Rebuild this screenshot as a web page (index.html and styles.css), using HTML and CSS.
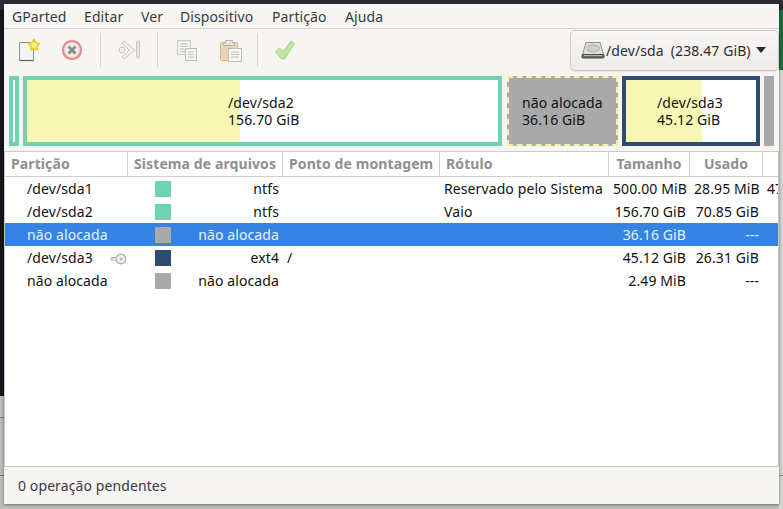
FILE: index.html
```html
<!DOCTYPE html>
<html lang="pt-BR">
<head>
<meta charset="utf-8">
<title>GParted</title>
<link rel="stylesheet" href="styles.css">
</head>
<body>
<div class="window">
  <nav class="menubar">
    <span class="menu m1">GParted</span>
    <span class="menu m2">Editar</span>
    <span class="menu m3">Ver</span>
    <span class="menu m4">Dispositivo</span>
    <span class="menu m5">Partição</span>
    <span class="menu m6">Ajuda</span>
  </nav>
  <div class="toolbar">
    <svg class="tool t-new" width="24" height="24" viewBox="0 0 24 24">
      <path d="M3.500 4.500h14v17.500a.5.5 0 0 1-.5.5h-13.500z" fill="#f4f4f0" stroke="#8f8f8a"/>
      <path d="M4 22.500h13.500" stroke="#5f5f5b" stroke-width="1.200"/>
      <path d="M18 1.500l1.800 3.300 3.700.7-2.600 2.700.5 3.800-3.400-1.700-3.400 1.700.5-3.800-2.600-2.700 3.700-.7z" fill="#fbf08a" stroke="#ecd21b" stroke-width="1.600" stroke-linejoin="round"/>
    </svg>
    <svg class="tool t-del" width="24" height="24" viewBox="0 0 24 24">
      <circle cx="12" cy="12" r="9" fill="#ececec" stroke="#e88d8d" stroke-width="2.400"/>
      <path d="M8.500 8.500l7 7M15.500 8.500l-7 7" stroke="#8a8a8a" stroke-width="2.800"/>
    </svg>
    <span class="sep sep1"></span>
    <svg class="tool t-undo" width="24" height="24" viewBox="0 0 24 24">
      <path d="M7 3l11 9-11 9-2-2 7-7-7-7z" fill="#f1f0ee" stroke="#c9c8c4" stroke-linejoin="round"/>
      <circle cx="5" cy="12" r="3" fill="#f1f0ee" stroke="#c6c5c1"/>
      <rect x="19.500" y="3" width="3" height="17" rx="1" fill="#e9e8e5" stroke="#c6c5c1"/>
    </svg>
    <span class="sep sep2"></span>
    <svg class="tool t-copy" width="24" height="24" viewBox="0 0 24 24">
      <rect x="2.500" y="2.500" width="13" height="14" fill="#f2f2f0" stroke="#c5c5c2"/>
      <path d="M5 6h8M5 8.500h8M5 11h8M5 13.500h5" stroke="#c6c6c3"/>
      <rect x="10.500" y="10.500" width="11" height="12" fill="#f2f2f0" stroke="#bcbcb9"/>
      <path d="M13 14h6M13 16.500h6M13 19h6" stroke="#c6c6c3"/>
    </svg>
    <svg class="tool t-paste" width="24" height="24" viewBox="0 0 24 24">
      <rect x="1.500" y="4.500" width="17" height="18" rx="1" fill="#ecd4b0" stroke="#d2b78f"/>
      <path d="M6.500 5V2.500h7V5h2v2.500h-11V5z" fill="#e6e6e4" stroke="#b5b5b2"/>
      <rect x="9.500" y="10.500" width="13" height="13" fill="#f7f7f5" stroke="#bcbcb9"/>
      <path d="M12 14h8M12 16.500h8M12 19h8" stroke="#bdbdba"/>
    </svg>
    <span class="sep sep3"></span>
    <svg class="tool t-apply" width="24" height="24" viewBox="0 0 24 24">
      <path d="M2.500 13.500l4-3.500 3.500 3.500 8-10.500 3.500 2.500-10 15.500h-3z" fill="#c4e5a2" stroke="#a8d183" stroke-linejoin="round"/>
    </svg>
    <div class="device">
      <svg class="hdd" width="24" height="22" viewBox="0 0 24 22">
        <path d="M5 3.500h14l3.500 12h-21z" fill="#dededc" stroke="#8f8f8d"/>
        <ellipse cx="12" cy="9.500" rx="6.500" ry="3.500" fill="#cdcdcb" stroke="#b0b0ae"/>
        <rect x="1" y="15.500" width="22" height="3.500" rx="1" fill="#6d6d6b" stroke="#4a4a48"/>
        <path d="M3 16.500h18" stroke="#b5b5b3"/>
      </svg>
      <span class="dev-name">/dev/sda</span>
      <span class="dev-size">(238.47 GiB)</span>
      <span class="arrow"></span>
    </div>
  </div>
  <div class="map">
    <div class="part ntfs p1"><span class="free"></span></div>
    <div class="part ntfs p2"><span class="fill f2"></span><div class="label"><div>/dev/sda2</div><div>156.70 GiB</div></div></div>
    <div class="part unalloc p3"><div class="label"><div>não alocada</div><div>36.16 GiB</div></div></div>
    <div class="part ext4 p4"><span class="fill f4"></span><div class="label"><div>/dev/sda3</div><div>45.12 GiB</div></div></div>
    <div class="part tail"></div>
  </div>
  <div class="table">
    <div class="row head">
      <div class="cell">Partição</div>
      <div class="cell">Sistema de arquivos</div>
      <div class="cell">Ponto de montagem</div>
      <div class="cell">Rótulo</div>
      <div class="cell right-h">Tamanho</div>
      <div class="cell right-h">Usado</div>
      <div class="cell last"></div>
    </div>
    <div class="row">
      <div class="cell name">/dev/sda1</div>
      <div class="cell fs"><span class="swatch c-ntfs"></span><span>ntfs</span></div>
      <div class="cell"></div>
      <div class="cell">Reservado pelo Sistema</div>
      <div class="cell num">500.00 MiB</div>
      <div class="cell num">28.95 MiB</div>
      <div class="cell last">47</div>
    </div>
    <div class="row">
      <div class="cell name">/dev/sda2</div>
      <div class="cell fs"><span class="swatch c-ntfs"></span><span>ntfs</span></div>
      <div class="cell"></div>
      <div class="cell">Vaio</div>
      <div class="cell num">156.70 GiB</div>
      <div class="cell num">70.85 GiB</div>
      <div class="cell last"></div>
    </div>
    <div class="row selected">
      <div class="cell name">não alocada</div>
      <div class="cell fs"><span class="swatch c-un"></span><span>não alocada</span></div>
      <div class="cell"></div>
      <div class="cell"></div>
      <div class="cell num">36.16 GiB</div>
      <div class="cell num">---</div>
      <div class="cell last"></div>
    </div>
    <div class="row">
      <div class="cell name with-key">/dev/sda3
        <svg class="key" width="17" height="12" viewBox="0 0 17 12">
          <circle cx="11" cy="6" r="4.800" fill="#f0f0ee" stroke="#a5a5a2" stroke-width="1.200"/>
          <circle cx="11" cy="6" r="1.500" fill="#b5b5b2"/>
          <path d="M6.500 4.500H1.500L0.500 6l1 1.500 1-.8 1 .8 1-.8 1 .8h.5" fill="#ededeb" stroke="#a5a5a2"/>
        </svg>
      </div>
      <div class="cell fs"><span class="swatch c-ext"></span><span>ext4</span></div>
      <div class="cell">/</div>
      <div class="cell"></div>
      <div class="cell num">45.12 GiB</div>
      <div class="cell num">26.31 GiB</div>
      <div class="cell last"></div>
    </div>
    <div class="row">
      <div class="cell name">não alocada</div>
      <div class="cell fs"><span class="swatch c-un"></span><span>não alocada</span></div>
      <div class="cell"></div>
      <div class="cell"></div>
      <div class="cell num">2.49 MiB</div>
      <div class="cell num">---</div>
      <div class="cell last"></div>
    </div>
  </div>
  <footer class="status">0 operação pendentes</footer>
</div>
</body>
</html>
```

FILE: styles.css
```css
* { box-sizing: border-box; }
html, body { margin: 0; height: 100%; }
body {
  width: 783px;
  height: 509px;
  overflow: hidden;
  padding: 4px 4px 5px 4px;
  font-family: "Noto Sans", sans-serif;
  font-size: 14px;
  letter-spacing: 0.1px;
  color: #111;
  background:
    linear-gradient(#2b2b33 0 10px, transparent 10px) top / 100% 10px no-repeat,
    linear-gradient(#1e6b3e, #1e6b3e) right 10px / 4px 60px no-repeat,
    linear-gradient(#8a8a88, #8a8a88) right 475px / 4px 1px no-repeat,
    linear-gradient(#d4d4d2, #d4d4d2) right 70px / 4px 100% no-repeat,
    linear-gradient(#777775, #777775) left 417px / 4px 1px no-repeat,
    linear-gradient(#777775, #777775) left 475px / 4px 1px no-repeat,
    linear-gradient(#bdbdbb, #bdbdbb) left 396px / 4px 100% no-repeat,
    linear-gradient(#15151c, #15151c) left top / 4px 100% no-repeat,
    #c0c0be;
}
.window {
  width: 775px;
  height: 500px;
  display: flex;
  flex-direction: column;
  background: #f6f5f3;
  box-shadow: 0 1px 3px rgba(0, 0, 0, 0.45);
}
.menubar {
  height: 25px;
  flex: none;
  display: flex;
  align-items: center;
  border-bottom: 1px solid #d8d4d0;
  color: #3a3a3e;
  padding-left: 8px;
  padding-top: 1px;
}
.menu { display: block; }
.m1 { width: 72px; }
.m2 { width: 57px; }
.m3 { width: 39px; }
.m4 { width: 92px; }
.m5 { width: 73px; }
.toolbar {
  height: 42px;
  flex: none;
  display: flex;
  align-items: center;
  padding-left: 12px;
}
.tool { flex: none; display: block; }
.t-del { margin-left: 20px; }
.sep { width: 1px; height: 34px; background: #d9d6d2; flex: none; }
.sep1 { margin-left: 16px; }
.t-undo { margin-left: 16px; }
.sep2 { margin-left: 16px; }
.t-copy { margin-left: 17px; }
.t-paste { margin-left: 20px; }
.sep3 { margin-left: 14px; }
.t-apply { margin-left: 15px; }
.device {
  margin-left: auto;
  width: 209px;
  height: 41px;
  display: flex;
  align-items: center;
  padding-left: 10px;
  border: 1px solid #cfcac5;
  border-radius: 5px;
  background: linear-gradient(#f8f7f6, #ecebe9);
  color: #2e2e32;
  box-shadow: 0 1px 1px rgba(0, 0, 0, 0.08);
}
.hdd { flex: none; margin-right: 1px; }
.dev-size { margin-left: 7px; }
.arrow {
  margin-left: 5px;
  width: 0;
  height: 0;
  border-left: 5.500px solid transparent;
  border-right: 5.500px solid transparent;
  border-top: 6px solid #2e2e32;
}
.map {
  height: 70px;
  margin-top: 5px;
  flex: none;
  display: flex;
  gap: 4px;
  padding-left: 5px;
  color: #111;
}
.part { position: relative; height: 70px; background: #fff; flex: none; }
.ntfs { border: 4px solid #70d3b0; }
.ext4 { border: 4px solid #2f4b6d; }
.p1 { width: 10px; }
.p2 { width: 479px; }
.p3 { width: 111px; margin-left: 1px; }
.p4 { width: 138px; }
.unalloc {
  background: #a9a9a9;
  outline: 2px dashed #f4f1a0;
  outline-offset: -2px;
}
.tail { width: 10px; background: #a9a9a9; }
.fill { position: absolute; left: 0; top: 0; bottom: 0; background: #f7f7b5; }
.f2 { width: 213px; }
.f4 { width: 76px; }
.label {
  position: relative;
  height: 100%;
  display: flex;
  flex-direction: column;
  align-items: center;
  justify-content: center;
  line-height: 17px;
}
.label > div { width: max-content; }
.p2 .label { align-items: flex-start; padding-left: 201px; }
.p3 .label { align-items: flex-start; padding-left: 15px; }
.p4 .label { align-items: flex-start; padding-left: 31px; }
.table {
  flex: 1;
  margin-top: 5px;
  background: #fff;
  border: 1px solid #c8c4be;
  border-top-color: #cfcac5;
  overflow: hidden;
}
.row {
  height: 23px;
  display: grid;
  grid-template-columns: 123px 155px 157px 169px 81px 73px 1fr;
  align-items: center;
  white-space: nowrap;
}
.cell { padding: 0 4px; overflow: hidden; }
.head {
  height: 25px;
  font-weight: 700;
  color: #8f8f8f;
  background: #fff;
  border-bottom: 1px solid #d4d0cb;
}
.head .cell {
  height: 100%;
  line-height: 24px;
  padding: 0 6px;
  border-right: 1px solid #d4d0cb;
}
.head .last { border-right: 0; }
.right-h { text-align: center; }
.name { padding-left: 22px; position: relative; }
.key { position: absolute; left: 105px; top: 5px; }
.fs { display: flex; justify-content: space-between; align-items: center; padding-left: 27px; padding-right: 4px; }
.swatch { width: 16px; height: 16px; flex: none; }
.c-ntfs { background: #70d3b0; }
.c-un { background: #a9a9a9; }
.c-ext { background: #2f4b6d; }
.num { text-align: right; padding-right: 4px; }
.last { padding-left: 4px; }
.selected { background: #3584e4; color: #e8f0fb; }
.status {
  height: 37px;
  flex: none;
  display: flex;
  align-items: center;
  padding-left: 14px;
  color: #3a3a3e;
}
```
